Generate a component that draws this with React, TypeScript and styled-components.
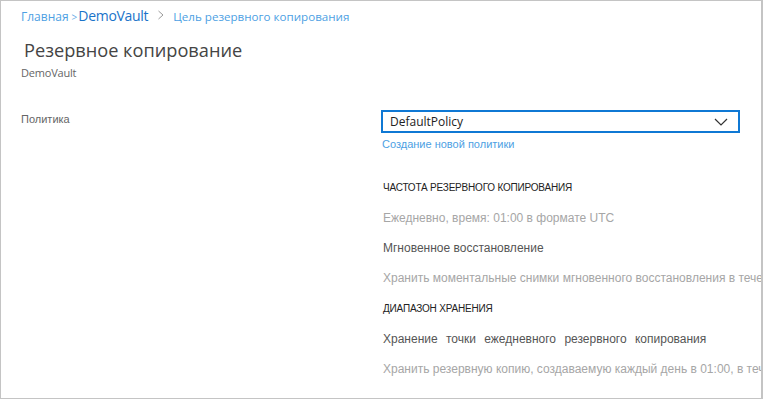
import React from "react";
import styled, { createGlobalStyle } from "styled-components";

const GlobalStyle = createGlobalStyle`
  html, body {
    margin: 0;
    padding: 0;
    background: #ffffff;
  }
  body {
    font-family: "Liberation Sans", Arial, sans-serif;
  }
`;

const Frame = styled.div`
  width: 763px;
  height: 399px;
  box-sizing: border-box;
  border: 1px solid #c4c4c4;
  border-right-width: 2px;
  overflow: hidden;
  background: #fff;
  padding: 5px 0 0 20px;
`;

const Breadcrumb = styled.nav`
  display: flex;
  align-items: baseline;
  height: 18px;
  font-family: "Open Sans", "Liberation Sans", sans-serif;
  font-size: 12px;
  color: #4d9fe3;
`;

const Crumb = styled.span<{ strong?: boolean; size?: number }>`
  color: ${(p) => (p.strong ? "#1a73c9" : "#4d9fe3")};
  font-size: ${(p) => (p.size ? `${p.size}px` : "12px")};
  letter-spacing: ${(p) => (p.strong ? "-0.3px" : "0")};
`;

const SmallSep = styled.span`
  font-size: 10px;
  color: #6aaee6;
  margin: 0 1px 0 3px;
`;

const Chevron = styled.svg`
  width: 8px;
  height: 10px;
  margin: 0 8px 0 9px;
  align-self: center;
`;

const Title = styled.h1`
  margin: 13px 0 0 3px;
  font-family: "Open Sans", "Liberation Sans", sans-serif;
  font-weight: 400;
  font-size: 18.2px;
  line-height: 26px;
  color: #444;
`;

const Subtitle = styled.div`
  margin-top: 2px;
  font-family: "Open Sans", "Liberation Sans", sans-serif;
  font-size: 11px;
  line-height: 16px;
  color: #666;
  letter-spacing: -0.2px;
`;

const FormRow = styled.div`
  display: flex;
  margin-top: 29px;
`;

const Label = styled.div`
  width: 360px;
  flex: none;
  font-size: 11px;
  color: #666;
  padding-top: 3px;
`;

const Field = styled.div`
  display: flex;
  flex-direction: column;
  flex: 1;
  min-width: 0;
`;

const Select = styled.div`
  width: 359px;
  height: 23px;
  box-sizing: border-box;
  border: 2px solid #0f78d4;
  display: flex;
  align-items: center;
  justify-content: space-between;
  padding: 0 10px 0 7px;
  font-family: "Open Sans", "Liberation Sans", sans-serif;
  font-size: 12px;
  color: #222;
`;

const Link = styled.div`
  margin-top: 5px;
  margin-left: 1px;
  font-size: 11px;
  color: #4d9fe3;
`;

const Details = styled.div`
  display: flex;
  flex-direction: column;
  margin-top: 30px;
  margin-left: 2px;
  white-space: nowrap;
`;

const Heading = styled.div`
  font-size: 10px;
  line-height: 15px;
  color: #222;
  letter-spacing: -0.2px;
  margin-bottom: 16px;
`;

const Line = styled.div<{ tone: "muted" | "dark"; wide?: boolean }>`
  font-size: 12px;
  line-height: 15px;
  color: ${(p) => (p.tone === "muted" ? "#a6a6a6" : "#555")};
  word-spacing: ${(p) => (p.wide ? "5px" : "0")};
  margin-bottom: 15px;
`;

export default function App() {
  return (
    <>
      <GlobalStyle />
      <Frame>
        <Breadcrumb>
          <Crumb>Главная</Crumb>
          <SmallSep>&gt;</SmallSep>
          <Crumb strong size={14}>DemoVault</Crumb>
          <Chevron viewBox="0 0 8 10">
            <path d="M1.5 1 L6 5 L1.5 9" fill="none" stroke="#9a9a9a" strokeWidth="1" />
          </Chevron>
          <Crumb size={11.6}>Цель резервного копирования</Crumb>
        </Breadcrumb>
        <Title>Резервное копирование</Title>
        <Subtitle>DemoVault</Subtitle>
        <FormRow>
          <Label>Политика</Label>
          <Field>
            <Select>
              <span>DefaultPolicy</span>
              <svg width="14" height="8" viewBox="0 0 14 8">
                <path d="M1 1 L7 7 L13 1" fill="none" stroke="#333" strokeWidth="1.2" />
              </svg>
            </Select>
            <Link>Создание новой политики</Link>
            <Details>
              <Heading>ЧАСТОТА РЕЗЕРВНОГО КОПИРОВАНИЯ</Heading>
              <Line tone="muted">Ежедневно, время: 01:00 в формате UTC</Line>
              <Line tone="dark">Мгновенное восстановление</Line>
              <Line tone="muted">Хранить моментальные снимки мгновенного восстановления в течение 2 дней</Line>
              <Heading>ДИАПАЗОН ХРАНЕНИЯ</Heading>
              <Line tone="dark" wide>Хранение точки ежедневного резервного копирования</Line>
              <Line tone="muted">Хранить резервную копию, создаваемую каждый день в 01:00, в течение 30 дней</Line>
            </Details>
          </Field>
        </FormRow>
      </Frame>
    </>
  );
}
